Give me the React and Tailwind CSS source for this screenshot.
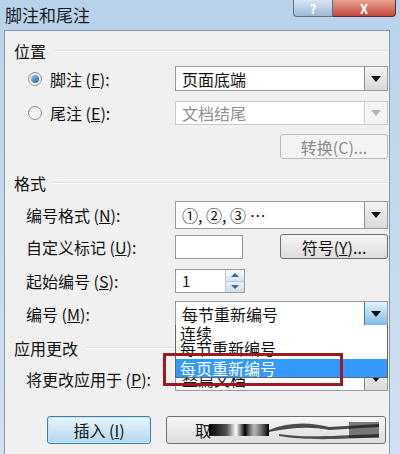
import React from "react";

const font = { fontFamily: '"Noto Sans CJK SC", "Noto Sans", sans-serif' };

function Arrow({ disabled, focused }) {
  return (
    <div
      className={
        "w-[23px] h-full flex items-center justify-center border-l " +
        (focused
          ? "bg-gradient-to-b from-[#e3f3fd] to-[#7fbbe6] border-[#3c7fb1]"
          : disabled
          ? "bg-[#f4f4f4] border-[#d3d3d3]"
          : "bg-gradient-to-b from-[#f4f4f4] to-[#d9d9d9] border-[#8a8a8a]")
      }
    >
      <svg width="10" height="6" viewBox="0 0 10 6">
        <path d="M0 0 L10 0 L5 6 Z" fill={disabled ? "#b5b5b5" : "#111"} />
      </svg>
    </div>
  );
}

function Select({ text, disabled, focused, h = "h-[25px]" }) {
  return (
    <div
      className={
        "w-[213px] flex items-stretch bg-white border " +
        h +
        " " +
        (disabled ? "border-[#c9c9c9]" : "border-[#9a9a9a]")
      }
    >
      <div
        className={
          "flex-1 flex items-center pl-[6px] text-[16px] " +
          (disabled ? "text-[#8f8f8f]" : "text-[#111]")
        }
      >
        {text}
      </div>
      <Arrow disabled={disabled} focused={focused} />
    </div>
  );
}

function Button({ children, disabled, className = "" }) {
  return (
    <div
      className={
        "h-[25px] w-[108px] flex items-center justify-center rounded-[3px] border text-[16px] " +
        (disabled
          ? "border-[#b8bcbf] bg-[#f4f4f4] text-[#8a8a8a]"
          : "border-[#707070] bg-gradient-to-b from-[#f6f6f6] to-[#dcdcdc] text-[#111]") +
        " " +
        className
      }
    >
      {children}
    </div>
  );
}

function Header({ children, className = "" }) {
  return (
    <div className={"h-[20px] flex items-center pl-[9px] pr-[2px] " + className}>
      <span className="text-[16px] text-[#111] leading-none">{children}</span>
      <div className="flex-1 ml-[8px] border-t border-[#d5dfe5] border-b border-b-white" />
    </div>
  );
}

function Row({ label, children, className = "" }) {
  return (
    <div className={"flex items-center pl-[21px] " + className}>
      <div className="w-[149px] text-[16px] text-[#111] whitespace-nowrap">{label}</div>
      {children}
    </div>
  );
}

function Radio({ checked, label }) {
  return (
    <div className="w-[149px] flex items-center gap-[8px] pl-[2px]">
      <div className="w-[14px] h-[14px] rounded-full border border-[#8d8d8d] bg-gradient-to-b from-[#e8e8e8] to-[#fafafa] flex items-center justify-center">
        {checked && (
          <div className="w-[8px] h-[8px] rounded-full bg-gradient-to-br from-[#9ad0f4] to-[#1d5f9b]" />
        )}
      </div>
      <span className="text-[16px] text-[#111] whitespace-nowrap">{label}</span>
    </div>
  );
}

export default function App() {
  return (
    <div
      style={font}
      className="relative w-[400px] h-[454px] overflow-hidden bg-gradient-to-b from-[#b9d2ec] to-[#cfe0f1]"
    >
      {/* title bar */}
      <div className="h-[30px] flex items-start relative">
        <div className="pl-[5px] pt-[2px] text-[17px] text-[#1b1b1b]">脚注和尾注</div>
        <div className="absolute top-0 left-[293px] flex">
          <div className="w-[40px] h-[17px] rounded-bl-[4px] border border-t-0 border-[#5f6f85] bg-gradient-to-b from-[#d9e6f3] to-[#9fb8d3] flex items-center justify-center text-[13px] font-bold text-white leading-none">
            ?
          </div>
          <div className="w-[63px] h-[17px] rounded-br-[4px] border border-t-0 border-l-0 border-[#6a2a25] bg-gradient-to-b from-[#e7a091] to-[#c4493b] flex items-center justify-center text-[13px] font-bold text-white leading-none">
            X
          </div>
        </div>
      </div>

      {/* body */}
      <div className="ml-[4px] w-[386px] h-[424px] bg-[#f0f0f0] border border-b-0 border-[#8796a8]">
        <Header className="mt-[10px]">位置</Header>

        <div className="flex items-center pl-[21px] mt-[5px]">
          <Radio checked label={<>脚注 (<u>F</u>):</>} />
          <Select text="页面底端" />
        </div>
        <div className="flex items-center pl-[21px] mt-[10px]">
          <Radio label={<>尾注 (<u>E</u>):</>} />
          <Select text="文档结尾" disabled h="h-[24px]" />
        </div>
        <div className="flex justify-end pr-[1px] mt-[9px]">
          <Button disabled>转换(C)...</Button>
        </div>

        <Header className="mt-[14px]">格式</Header>

        <Row label={<>编号格式 (<u>N</u>):</>} className="mt-[8px]">
          <Select text="①, ②, ③ …" h="h-[28px]" />
        </Row>
        <Row label={<>自定义标记 (<u>U</u>):</>} className="mt-[5px]">
          <div className="w-[68px] h-[24px] bg-white border border-[#9a9a9a]" />
          <Button className="ml-[37px]">符号(<u>Y</u>)...</Button>
        </Row>
        <Row label={<>起始编号 (<u>S</u>):</>} className="mt-[10px]">
          <div className="w-[70px] h-[24px] bg-white border border-[#9a9a9a] flex">
            <div className="flex-1 pl-[6px] text-[15px] leading-[22px] text-[#111]">1</div>
            <div className="w-[19px] flex flex-col border-l border-[#c9c9c9]">
              <div className="flex-1 flex items-center justify-center bg-gradient-to-b from-[#f3f8fc] to-[#d6e6f3] border-b border-[#b4c6d8]">
                <svg width="8" height="4" viewBox="0 0 8 4"><path d="M0 4 L8 4 L4 0 Z" fill="#4a6785" /></svg>
              </div>
              <div className="flex-1 flex items-center justify-center bg-gradient-to-b from-[#e6eff7] to-[#cddfee]">
                <svg width="8" height="4" viewBox="0 0 8 4"><path d="M0 0 L8 0 L4 4 Z" fill="#4a6785" /></svg>
              </div>
            </div>
          </div>
        </Row>
        <Row label={<>编号 (<u>M</u>):</>} className="mt-[8px]">
          <Select text="每节重新编号" focused />
        </Row>

        <Header className="mt-[12px]">应用更改</Header>

        <Row label={<>将更改应用于 (<u>P</u>):</>} className="mt-[9px]">
          <Select text="整篇文档" h="h-[24px]" />
        </Row>

        <div className="flex mt-[25px] pl-[42px] gap-[15px]">
          <div className="h-[28px] w-[104px] flex items-center justify-center rounded-[3px] border border-[#3c7fb1] bg-gradient-to-b from-[#eaf6fd] to-[#b3d6ee] text-[16px] text-[#111] shadow-[inset_0_0_0_1px_#c9e6f8]">
            插入 (<u>I</u>)
          </div>
          <div className="h-[28px] w-[220px] flex items-center rounded-[3px] border border-[#707070] bg-gradient-to-b from-[#f6f6f6] to-[#dcdcdc] text-[16px] text-[#111] pl-[28px] overflow-hidden">
            <span>取</span>
            <svg width="170" height="24" viewBox="0 0 170 24" className="-ml-[2px]">
              <defs>
                <linearGradient id="g1" x1="0" x2="1">
                  <stop offset="0" stopColor="#000" />
                  <stop offset="0.3" stopColor="#555" />
                  <stop offset="0.45" stopColor="#fff" />
                  <stop offset="0.6" stopColor="#000" />
                  <stop offset="0.75" stopColor="#444" stopOpacity="0.3" />
                  <stop offset="1" stopColor="#000" />
                </linearGradient>
              </defs>
              <rect x="0" y="6" width="60" height="12" fill="url(#g1)" />
              <path d="M60 12 C80 4 100 4 120 9 L170 6 L170 9 L120 12 C100 8 80 10 60 14 Z" fill="#222" opacity="0.8" />
              <path d="M70 16 C95 20 120 18 170 16 L170 19 C120 22 95 22 70 18 Z" fill="#111" opacity="0.7" />
              <path d="M140 4 L170 4 L170 20 L140 20 Z" fill="#1a1a1a" opacity="0.55" />
            </svg>
          </div>
        </div>
      </div>

      {/* open dropdown list */}
      <div className="absolute left-[175px] top-[325px] w-[213px] h-[53px] bg-white border border-[#646464] border-t-0 text-[16px] text-[#111]">
        <div className="pl-[4px] leading-[15px] pt-[1px]">连续</div>
        <div className="pl-[4px] leading-[15px]">每节重新编号</div>
        <div className="absolute left-0 right-0 bottom-0 h-[18px] bg-[#3399ff] text-white pl-[4px] leading-[18px]">
          每页重新编号
        </div>
      </div>

      {/* red highlight frame */}
      <div className="absolute left-[163px] top-[353px] w-[180px] h-[33px] border-[3px] border-[#9a1c1f]" />
    </div>
  );
}
